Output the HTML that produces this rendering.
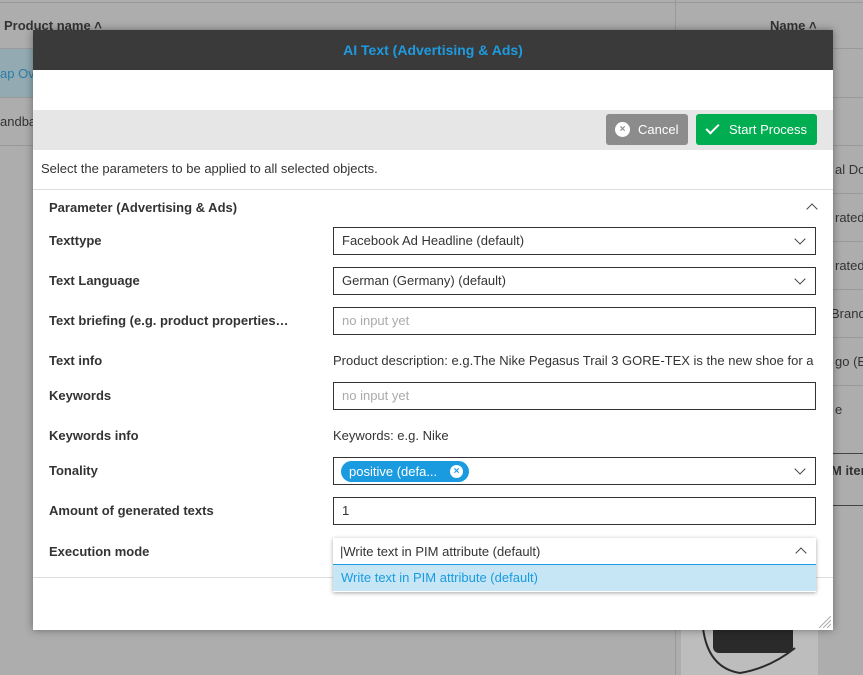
<!DOCTYPE html>
<html><head><style>
*{box-sizing:border-box;margin:0;padding:0}
body{width:863px;height:675px;overflow:hidden;background:#adadad;font-family:"Liberation Sans","DejaVu Sans",sans-serif;font-size:13px;color:#333;position:relative}
.abs{position:absolute;white-space:nowrap}
.hl{position:absolute;height:1px;background:#999}
.lab{position:absolute;left:49px;font-weight:bold;color:#333;white-space:nowrap}
.inp{position:absolute;left:333px;width:483px;height:28px;border:1px solid #333;background:#fff;padding:0 8px;line-height:26px;white-space:nowrap}
.ph{color:#aaa}
.chev{position:absolute;right:11px;top:7px;width:8px;height:8px;border-right:1.5px solid #444;border-bottom:1.5px solid #444;transform:rotate(45deg)}
</style></head><body>
<div class="hl" style="top:2px;left:0;width:863px"></div>
<div class="abs" style="left:675px;top:0;width:1px;height:675px;background:#999"></div>
<div class="abs" style="left:4px;top:18px;font-weight:bold">Product name ˄</div>
<div class="abs" style="left:770px;top:18px;font-weight:bold">Name ˄</div>
<div class="abs" style="left:0;top:49px;width:40px;height:48px;background:#93aab3"></div>
<div class="abs" style="left:0;top:66px;color:#2a7fa8">ap Ov</div>
<div class="abs" style="left:0;top:114px">andba</div>
<div class="hl" style="top:48px;left:0;width:863px"></div>
<div class="hl" style="top:97px;left:0;width:863px"></div>
<div class="hl" style="top:145px;left:0;width:863px"></div>
<div class="hl" style="top:193px;left:833px;width:30px"></div>
<div class="hl" style="top:241px;left:833px;width:30px"></div>
<div class="hl" style="top:289px;left:833px;width:30px"></div>
<div class="hl" style="top:337px;left:833px;width:30px"></div>
<div class="hl" style="top:385px;left:833px;width:30px"></div>
<div class="hl" style="top:453px;left:833px;width:30px;background:#444"></div>
<div class="hl" style="top:505px;left:833px;width:30px;background:#444"></div>
<div class="abs" style="left:835px;top:162px">al Do</div>
<div class="abs" style="left:835px;top:210px">rated</div>
<div class="abs" style="left:835px;top:258px">rated</div>
<div class="abs" style="left:831px;top:306px">Brand</div>
<div class="abs" style="left:835px;top:354px">go (E</div>
<div class="abs" style="left:835px;top:402px">e</div>
<div class="abs" style="left:831px;top:463px;font-weight:bold">M iter</div>
<div class="abs" style="left:681px;top:630px;width:137px;height:45px;background:#bdbdbd"></div>
<div class="abs" style="left:713px;top:628px;width:80px;height:25px;background:#2a2a2a;border-radius:0 0 6px 6px"></div>
<svg class="abs" style="left:700px;top:628px" width="100" height="47"><path d="M3 0 Q8 40 40 45 Q70 40 95 20" stroke="#2a2a2a" stroke-width="2" fill="none"/></svg>

<div class="abs" style="left:33px;top:30px;width:800px;height:600px;background:#fff;box-shadow:0 0 8px rgba(0,0,0,.4)">
 <div class="abs" style="left:0;top:0;width:800px;height:40px;background:#3a3a3a;color:#1e9be0;font-weight:bold;font-size:14px;text-align:center;line-height:40px">AI Text (Advertising &amp; Ads)</div>
 <div class="abs" style="left:0;top:80px;width:800px;height:40px;background:#e6e6e6"></div>
 <div class="abs" style="left:573px;top:84px;width:82px;height:31px;background:#8c8c8c;border-radius:3px;color:#fff;line-height:31px;padding-left:32px">Cancel
  <span class="abs" style="left:9px;top:8px;width:15px;height:15px;border-radius:50%;background:#fff;color:#8c8c8c;font-size:10px;line-height:15px;text-align:center;font-weight:bold">×</span></div>
 <div class="abs" style="left:663px;top:84px;width:121px;height:31px;background:#00ad50;border-radius:3px;color:#fff;line-height:31px;padding-left:33px">Start Process
  <span class="abs" style="left:13px;top:7px;width:7px;height:13px;border-right:2px solid #fff;border-bottom:2px solid #fff;transform:rotate(45deg)"></span></div>
 <div class="abs" style="left:8px;top:131px">Select the parameters to be applied to all selected objects.</div>
 <div class="abs" style="left:0;top:159px;width:800px;height:1px;background:#ddd"></div>
 <div class="abs" style="left:16px;top:170px;font-weight:bold">Parameter (Advertising &amp; Ads)</div>
 <div class="abs" style="left:775px;top:175px;width:8px;height:8px;border-left:1.5px solid #444;border-top:1.5px solid #444;transform:rotate(45deg)"></div>
 <div class="abs" style="left:0;top:547px;width:800px;height:1px;background:#ddd"></div>
 <svg class="abs" style="left:786px;top:586px" width="12" height="12"><path d="M0 12L12 0M4 12L12 4M8 12L12 8" stroke="#aaa"/></svg>
</div>

<div class="lab" style="top:233px">Texttype</div>
<div class="inp" style="top:227px">Facebook Ad Headline (default)<span class="chev"></span></div>
<div class="lab" style="top:273px">Text Language</div>
<div class="inp" style="top:267px">German (Germany) (default)<span class="chev"></span></div>
<div class="lab" style="top:313px">Text briefing (e.g. product properties…</div>
<div class="inp ph" style="top:307px">no input yet</div>
<div class="lab" style="top:353px">Text info</div>
<div class="abs" style="left:333px;top:353px;width:483px;overflow:hidden">Product description: e.g.The Nike Pegasus Trail 3 GORE-TEX is the new shoe for a</div>
<div class="lab" style="top:388px">Keywords</div>
<div class="inp ph" style="top:382px">no input yet</div>
<div class="lab" style="top:428px">Keywords info</div>
<div class="abs" style="left:333px;top:428px">Keywords: e.g. Nike</div>
<div class="lab" style="top:463px">Tonality</div>
<div class="inp" style="top:457px"><span class="abs" style="left:7px;top:3px;height:21px;width:128px;background:#1a9be0;border-radius:11px;color:#fff;line-height:21px;padding-left:8px">positive (defa...<span class="abs" style="right:6px;top:4px;width:13px;height:13px;border-radius:50%;background:#fff;color:#1a9be0;font-size:10px;font-weight:bold;line-height:13px;text-align:center">×</span></span><span class="chev"></span></div>
<div class="lab" style="top:503px">Amount of generated texts</div>
<div class="inp" style="top:497px">1</div>
<div class="lab" style="top:544px">Execution mode</div>
<div class="abs" style="left:333px;top:538px;width:483px;height:54px;box-shadow:0 1px 4px rgba(0,0,0,.35);background:#fff">
 <div style="height:27px;line-height:27px;padding-left:7px;border-bottom:1px solid #1a9be0">|Write text in PIM attribute (default)</div>
 <div style="height:26px;line-height:26px;padding-left:8px;background:#c6e6f6;color:#1a9be0">Write text in PIM attribute (default)</div>
 <span class="abs" style="right:11px;top:11px;width:8px;height:8px;border-left:1.5px solid #444;border-top:1.5px solid #444;transform:rotate(45deg)"></span>
</div>
</body></html>
